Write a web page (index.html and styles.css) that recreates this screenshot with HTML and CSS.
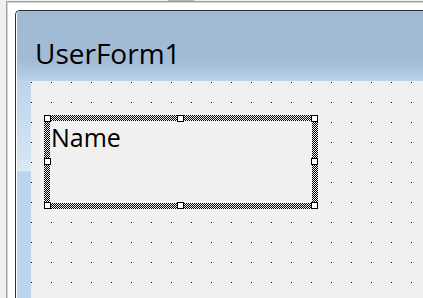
FILE: index.html
```html
<!DOCTYPE html>
<html>
<head>
<meta charset="utf-8">
<link rel="stylesheet" href="styles.css">
</head>
<body>
<div class="topstrip"><div class="tab"></div></div>
<div class="frame">
  <div class="window">
    <div class="titlebar">UserForm1</div>
    <div class="client">
      <div class="leftstrip"></div>
      <div class="canvas">
        <div class="selection">
          <svg class="hatch" width="274" height="94" viewBox="0 0 274 94" shape-rendering="crispEdges">
            <defs>
              <pattern id="chk" x="0" y="0" width="2" height="2" patternUnits="userSpaceOnUse">
                <rect x="0" y="0" width="2" height="2" fill="#f0f0f0"/>
                <rect x="0" y="0" width="1" height="1" fill="#000"/>
                <rect x="1" y="1" width="1" height="1" fill="#000"/>
              </pattern>
            </defs>
            <rect x="0" y="0" width="274" height="94" fill="url(#chk)"/>
          </svg>
          <div class="label">Name</div>
          <span class="handle h-tl"></span>
          <span class="handle h-tm"></span>
          <span class="handle h-tr"></span>
          <span class="handle h-ml"></span>
          <span class="handle h-mr"></span>
          <span class="handle h-bl"></span>
          <span class="handle h-bm"></span>
          <span class="handle h-br"></span>
        </div>
      </div>
    </div>
  </div>
</div>
</body>
</html>
```
FILE: styles.css
```css
html, body {
  margin: 0;
  padding: 0;
  height: 100%;
  overflow: hidden;
}
body {
  background: #f0f0f0;
  font-family: "Open Sans", "Noto Sans", sans-serif;
  display: flex;
  flex-direction: column;
}
.topstrip {
  height: 1px;
  flex: none;
}
.tab {
  margin-left: 168px;
  width: 26px;
  height: 1px;
  background: #b4b4b4;
}
.frame {
  flex: 1;
  margin-left: 6px;
  border-left: 1px solid #a0a0a0;
  border-top: 1px solid #a0a0a0;
  box-shadow: inset 1px 1px 0 #d4d4d4;
  background: #fff;
  padding: 8px 0 0 8px;
  display: flex;
  flex-direction: column;
  min-height: 0;
}
.window {
  flex: 1;
  border-left: 1px solid #2e2e2e;
  border-top: 1px solid #2e2e2e;
  border-top-left-radius: 5px;
  background: #fff;
  padding-left: 1px;
  overflow: hidden;
  display: flex;
  flex-direction: column;
}
.titlebar {
  flex: none;
  height: 70px;
  box-sizing: border-box;
  padding: 28px 0 0 18px;
  font-size: 28px;
  line-height: 28px;
  color: #000;
  background: linear-gradient(to bottom, #a0b9d5 0%, #a2bbd6 70%, #b0c8e2 88%, #bcd2ea 100%);
  border-top-left-radius: 4px;
}
.client {
  flex: 1;
  display: flex;
  min-height: 0;
}
.leftstrip {
  flex: none;
  width: 14px;
  background: linear-gradient(to bottom, #bed4ec 0px, #d2e2f2 70px, #dce9f5 90px, #bcd4ec 91px, #bcd4ec 100%);
}
.canvas {
  flex: 1;
  background-color: #f0f0f0;
  background-image:
    linear-gradient(to right, transparent 1px, #f0f0f0 1px),
    linear-gradient(to bottom, #000 1px, #f0f0f0 1px);
  background-size: 20px 20px, 20px 20px;
  background-position: 0 1px, 0 1px;
  padding: 34px 0 0 13px;
}
.selection {
  position: relative;
  width: 274px;
  height: 94px;
  box-sizing: border-box;
  padding: 6px;
}
.hatch {
  position: absolute;
  left: 0;
  top: 0;
  display: block;
}
.label {
  position: relative;
  height: 100%;
  background: #f0f0f0;
  box-sizing: border-box;
  padding: 4px 0 0 1px;
  font-size: 25px;
  line-height: 25px;
  color: #000;
}
.handle {
  position: absolute;
  width: 7px;
  height: 7px;
  box-sizing: border-box;
  border: 1px solid #000;
  background: #fff;
}
.h-tl { left: 0; top: 0; }
.h-tm { left: 133px; top: 0; }
.h-tr { left: 267px; top: 0; }
.h-ml { left: 0; top: 43px; }
.h-mr { left: 267px; top: 43px; }
.h-bl { left: 0; top: 87px; }
.h-bm { left: 133px; top: 87px; }
.h-br { left: 267px; top: 87px; }
```
